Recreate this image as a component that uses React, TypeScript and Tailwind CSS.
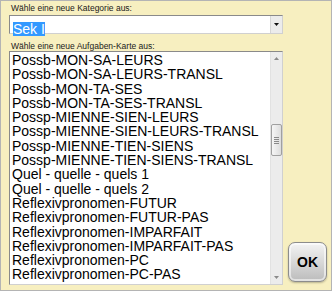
import React from "react";

const cards = [
  "Possb-MON-SA-LEURS",
  "Possb-MON-SA-LEURS-TRANSL",
  "Possb-MON-TA-SES",
  "Possb-MON-TA-SES-TRANSL",
  "Possp-MIENNE-SIEN-LEURS",
  "Possp-MIENNE-SIEN-LEURS-TRANSL",
  "Possp-MIENNE-TIEN-SIENS",
  "Possp-MIENNE-TIEN-SIENS-TRANSL",
  "Quel - quelle - quels 1",
  "Quel - quelle - quels 2",
  "Reflexivpronomen-FUTUR",
  "Reflexivpronomen-FUTUR-PAS",
  "Reflexivpronomen-IMPARFAIT",
  "Reflexivpronomen-IMPARFAIT-PAS",
  "Reflexivpronomen-PC",
  "Reflexivpronomen-PC-PAS",
];

export default function App() {
  return (
    <div
      className="w-[332px] h-[291px] bg-[#f7efc0] border border-[#b4b4b4] relative"
      style={{ fontFamily: '"Liberation Sans", Arial, sans-serif' }}
    >
      <div className="pl-[8px] pt-[2px] w-[282px]">
        {/* Kategorie */}
        <div className="text-[8.5px] leading-[10px] text-[#1a1a1a] pl-[2px]">
          Wähle eine neue Kategorie aus:
        </div>
        <div className="mt-[2px] h-[19px] flex bg-white border border-t-[#8a8a8a] border-l-[#8a8a8a] border-r-[#d0d0d0] border-b-[#d0d0d0]">
          <div className="flex-1 pl-[3px] pt-[1px]">
            <span className="bg-[#3399ff] text-white text-[14px] leading-[14px] inline-block">Sek I</span>
          </div>
          <div className="w-[12px] bg-[#ececec] border-l border-[#d6d6d6] flex items-center justify-center">
            <svg width="5" height="3" viewBox="0 0 5 3">
              <path d="M0 0h5L2.5 3z" fill="#111" />
            </svg>
          </div>
        </div>

        {/* Aufgaben-Karte */}
        <div className="mt-[7px] text-[8.5px] leading-[10px] text-[#1a1a1a] pl-[2px]">
          Wähle eine neue Aufgaben-Karte aus:
        </div>
        <div className="h-[234px] flex bg-white border border-t-[#8a8a8a] border-l-[#8a8a8a] border-r-[#d0d0d0] border-b-[#d0d0d0]">
          <div className="flex-1 overflow-hidden pl-[2px] pt-[1px]">
            {cards.map((c) => (
              <div key={c} className="text-[14px] leading-[14.3px] text-black whitespace-nowrap">
                {c}
              </div>
            ))}
          </div>
          <div className="w-[12px] bg-[#ececec] border-l border-[#e2e2e2] flex flex-col items-center">
            <div className="h-[13px] flex items-center justify-center">
              <svg width="5" height="3" viewBox="0 0 5 3">
                <path d="M2.5 0L5 3H0z" fill="#8a8a8a" />
              </svg>
            </div>
            <div className="mt-[59px] w-[11px] h-[32px] rounded-[2px] border border-[#a0a0a0] bg-gradient-to-r from-[#f6f6f6] to-[#dddddd] flex flex-col items-center justify-center gap-[1px]">
              <div className="w-[5px] h-px bg-[#8a8a8a]" />
              <div className="w-[5px] h-px bg-[#8a8a8a]" />
              <div className="w-[5px] h-px bg-[#8a8a8a]" />
              <div className="w-[5px] h-px bg-[#8a8a8a]" />
            </div>
            <div className="flex-1" />
            <div className="h-[13px] flex items-center justify-center">
              <svg width="5" height="3" viewBox="0 0 5 3">
                <path d="M0 0h5L2.5 3z" fill="#8a8a8a" />
              </svg>
            </div>
          </div>
        </div>
      </div>

      {/* OK button */}
      <button className="absolute left-[287px] top-[241px] w-[39px] h-[40px] rounded-[7px] border border-[#8c8c8c] bg-gradient-to-b from-[#f4f4f4] via-[#d8d8d8] to-[#bcbcbc] shadow-[inset_0_0_0_2px_rgba(255,255,255,0.55),0_1px_2px_rgba(0,0,0,0.25)] text-[14px] font-bold text-black flex items-center justify-center">
        OK
      </button>
    </div>
  );
}
